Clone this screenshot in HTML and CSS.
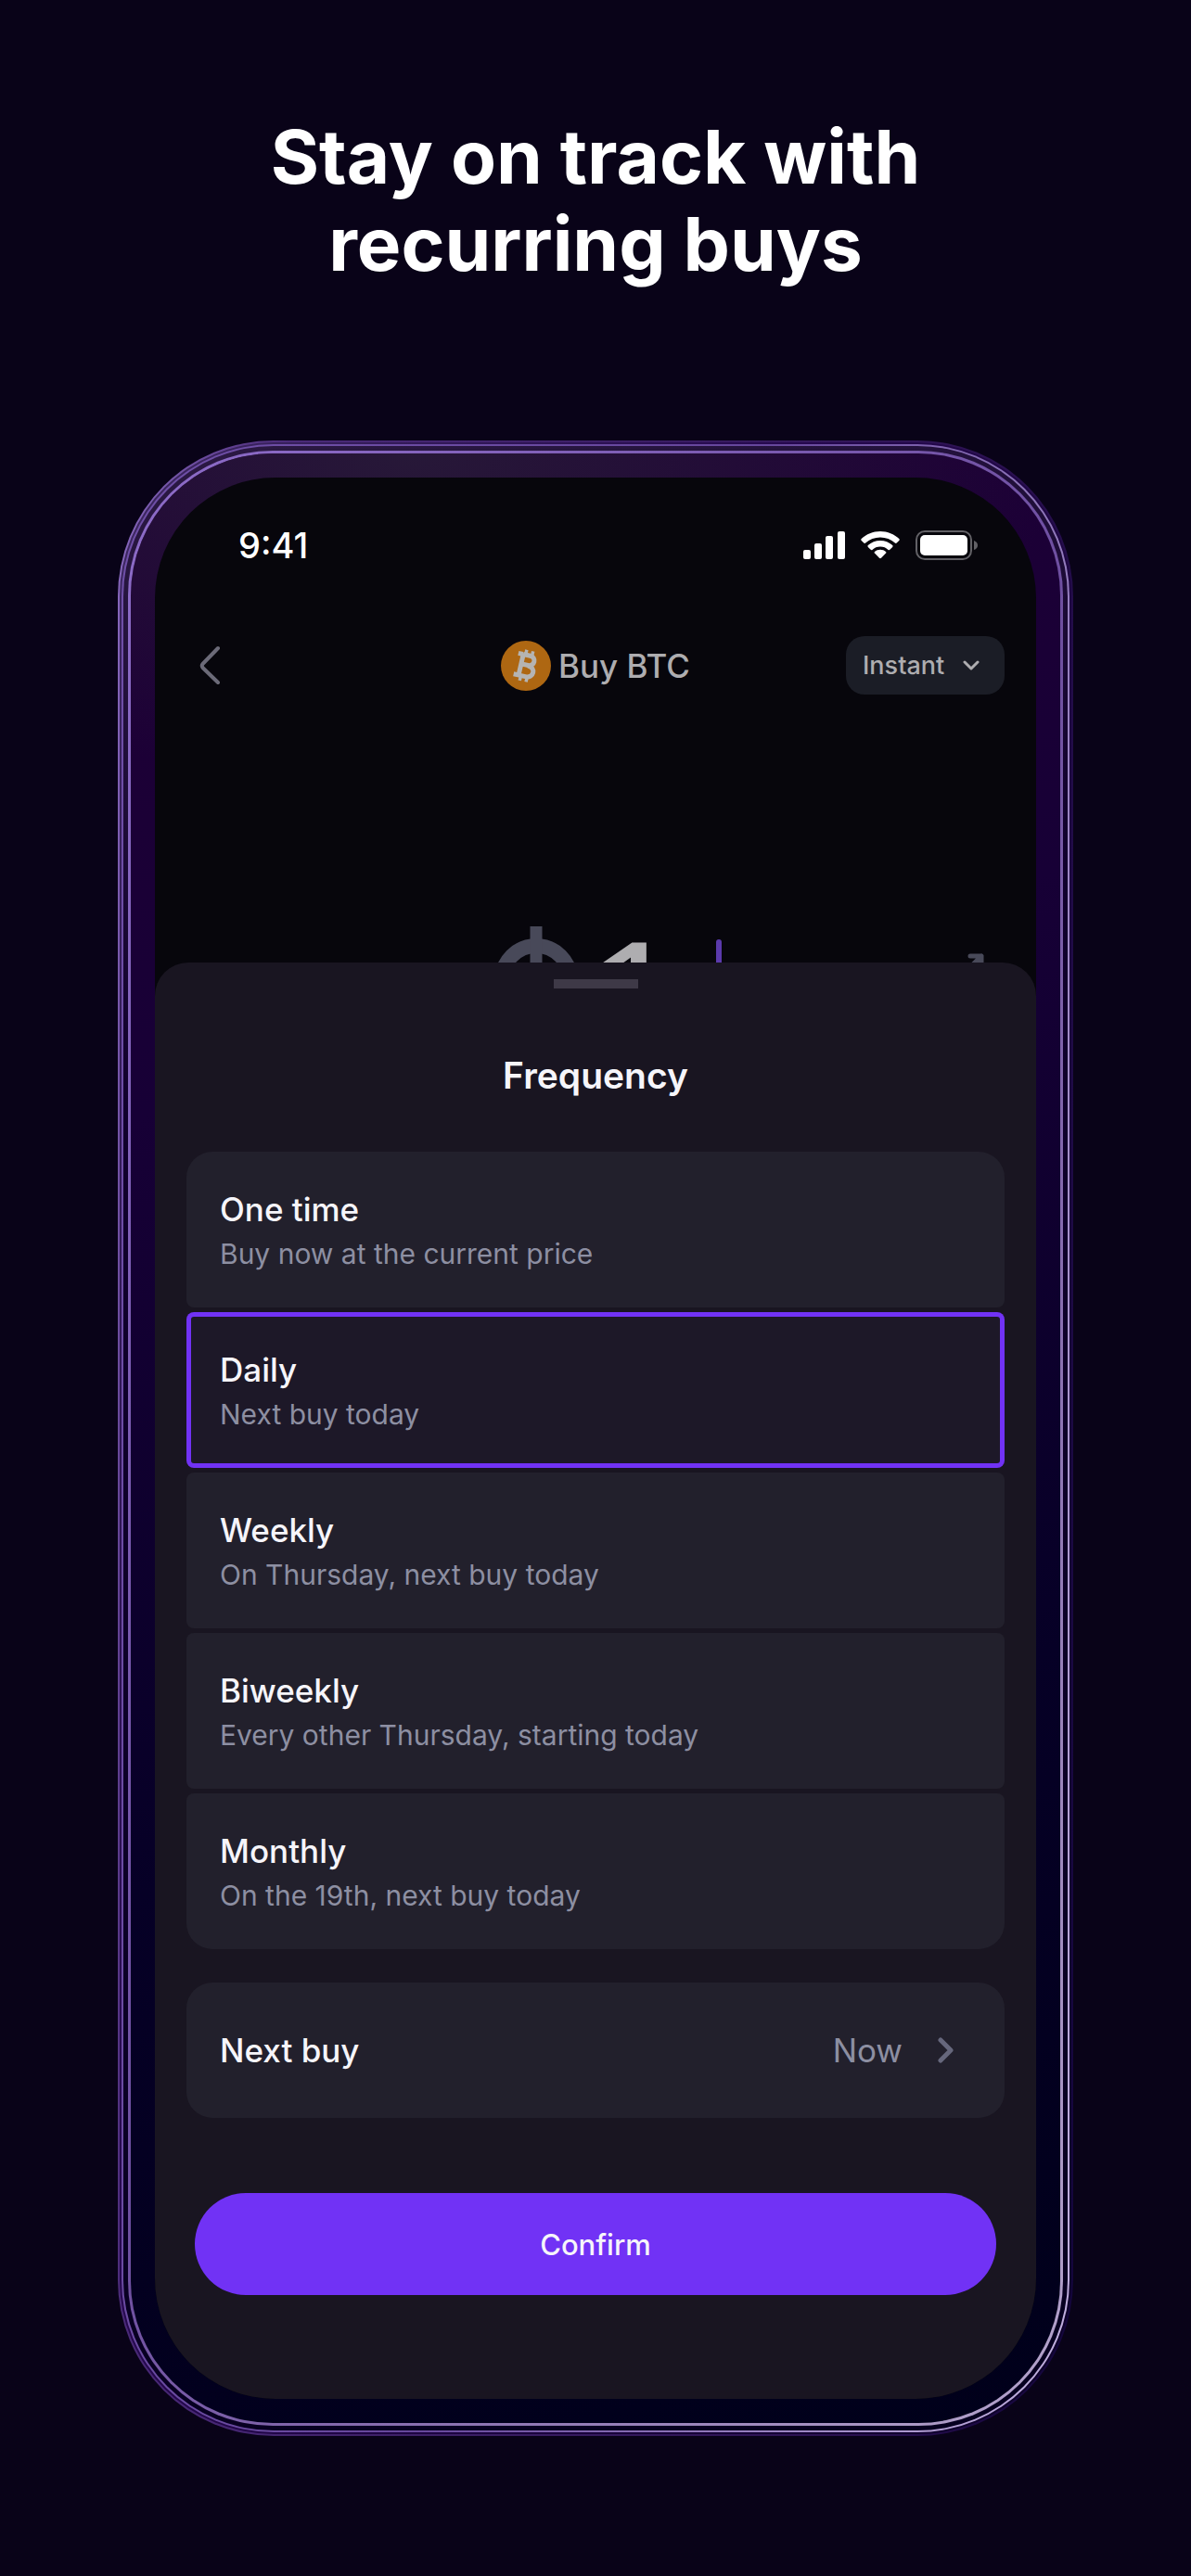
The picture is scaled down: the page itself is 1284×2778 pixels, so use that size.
FILE: index.html
```html
<!DOCTYPE html>
<html lang="en">
<head>
<meta charset="utf-8">
<meta name="viewport" content="width=device-width, initial-scale=1">
<title>Recurring buys</title>
<link rel="stylesheet" href="styles.css">
</head>
<body>
<main class="promo">
  <h1 class="headline">Stay on track with<br>recurring buys</h1>
  <div class="phone">
    <div class="phone-rim">
      <div class="phone-bezel">
        <div class="screen">
          <div class="status-bar">
            <span class="clock">9:41</span>
            <div class="status-icons">
              <svg width="45" height="30" viewBox="0 0 45 30" fill="#fff" aria-hidden="true">
                <rect x="0" y="20" width="8" height="10" rx="2"/><rect x="12" y="13" width="8" height="17" rx="2"/><rect x="24" y="5" width="8" height="25" rx="2"/><rect x="37" y="0" width="8" height="30" rx="2"/>
              </svg>
              <svg width="42" height="30" viewBox="0 0 42 30" fill="#fff" aria-hidden="true">
                <path d="M21 0C13 0 6 3 .7 8c-.6.6-.6 1.300 0 1.900l2.600 2.600c.5.5 1.200.5 1.800 0C9.400 8.600 15 6.400 21 6.400s11.600 2.200 15.900 6.100c.6.5 1.300.5 1.800 0l2.600-2.600c.6-.6.6-1.300 0-1.900C36 3 29 0 21 0z"/>
                <path d="M21 10c-5 0-9.700 1.900-13.200 5.100-.5.500-.5 1.200 0 1.800l2.900 2.900c.5.5 1.200.5 1.700.1 2.300-2.100 5.300-3.300 8.600-3.300s6.300 1.200 8.600 3.300c.5.400 1.200.4 1.700-.1l2.900-2.900c.5-.6.5-1.300 0-1.800C30.700 11.900 26 10 21 10z"/>
                <path d="M21 19.800c-2.300 0-4.400.8-6 2.100-.6.500-.6 1.200-.1 1.700l5.100 5.200c.6.600 1.400.6 2 0l5.100-5.200c.5-.5.500-1.200-.1-1.700-1.600-1.300-3.700-2.100-6-2.100z"/>
              </svg>
              <svg width="68" height="32" viewBox="0 0 68 32" aria-hidden="true">
                <rect x="1" y="1" width="59" height="30" rx="9" fill="none" stroke="#626166" stroke-width="2"/>
                <rect x="5" y="5" width="51" height="22" rx="5" fill="#fff"/>
                <path d="M63 11q4 1.500 4 5t-4 5z" fill="#626166"/>
              </svg>
            </div>
          </div>

          <header class="top-bar">
            <button class="back" type="button" aria-label="Back">
              <svg width="24" height="44" viewBox="0 0 24 44" fill="none" stroke="#6b6a78" stroke-width="4" stroke-linecap="round" stroke-linejoin="round" aria-hidden="true"><path d="M20 3 3.500 20Q2 22 3.500 24L20 40"/></svg>
            </button>
            <h2 class="asset">
              <svg width="54" height="54" viewBox="0 0 54 54" aria-hidden="true">
                <circle cx="27" cy="27" r="27" fill="#ae6712"/>
                <g transform="rotate(13 27 27)" fill="none" stroke="#b5b4b3" stroke-width="5">
                  <path d="M16 15.500h5M16 38.500h5M21.500 15.500h7.500c7.500 0 7.500 10.500 0 10.500h-7M29 26.500c9.500 0 9.500 12 0 12h-8M21.500 14v25" stroke-linejoin="round"/>
                  <path d="M24 10v6M31 10v6M24 38v6M31 38v6" stroke-width="3.500"/>
                </g>
              </svg>
              Buy BTC
            </h2>
            <label class="speed">
              <select class="speed-select" aria-label="Order speed"><option>Instant</option></select>
              <svg class="speed-arrow" width="20" height="12" viewBox="0 0 20 12" fill="none" stroke="#aeadb0" stroke-width="3" stroke-linecap="round" stroke-linejoin="round" aria-hidden="true"><path d="M3 2l7 7 7-7"/></svg>
            </label>
          </header>

          <section class="amount" aria-label="Amount">
            <div class="amount-value">
              <svg width="92" height="112" viewBox="0 0 92 112" fill="none" stroke="#484959" aria-hidden="true">
                <circle cx="46" cy="58" r="37" stroke-width="16"/><path d="M46 0v112" stroke-width="13"/>
              </svg>
              <span class="digits">1</span>
              <span class="caret"></span>
            </div>
            <svg class="swap" width="40" height="40" viewBox="0 0 40 40" fill="none" stroke="#484959" stroke-width="5" stroke-linecap="round" stroke-linejoin="round" aria-hidden="true"><path d="M25 4h12v12M37 4 4 37M4 25v12h12"/></svg>
          </section>

          <form class="sheet">
            <div class="handle"></div>
            <h3 class="sheet-title">Frequency</h3>
            <div class="options" role="radiogroup" aria-label="Frequency">
              <label class="option"><input type="radio" name="frequency"><span class="option-name">One time</span><span class="option-note">Buy now at the current price</span></label>
              <label class="option"><input type="radio" name="frequency" checked><span class="option-name">Daily</span><span class="option-note">Next buy today</span></label>
              <label class="option"><input type="radio" name="frequency"><span class="option-name">Weekly</span><span class="option-note">On Thursday, next buy today</span></label>
              <label class="option"><input type="radio" name="frequency"><span class="option-name">Biweekly</span><span class="option-note">Every other Thursday, starting today</span></label>
              <label class="option"><input type="radio" name="frequency"><span class="option-name">Monthly</span><span class="option-note">On the 19th, next buy today</span></label>
            </div>
            <button class="next-buy" type="button">
              <span class="option-name">Next buy</span>
              <span class="next-value">Now</span>
              <svg width="18" height="30" viewBox="0 0 18 30" fill="none" stroke="#66677c" stroke-width="5" stroke-linecap="round" stroke-linejoin="round" aria-hidden="true"><path d="M3 4l11 11L3 26"/></svg>
            </button>
            <button class="confirm" type="button">Confirm</button>
          </form>
        </div>
      </div>
    </div>
  </div>
</main>
</body>
</html>
```

FILE: styles.css
```css
* { box-sizing: border-box; }

body {
  margin: 0;
  min-height: 100vh;
  background: #090318;
  color: #f6f5fa;
  font-family: Inter, "Liberation Sans", sans-serif;
}

h1, h2, h3 { margin: 0; }
button, select { border: 0; font: inherit; color: inherit; }
svg { display: block; flex: none; }

.promo { padding: 122px 127px 150px; }

.headline {
  margin-bottom: 165px;
  font-size: 80px;
  line-height: 94px;
  font-weight: 700;
  text-align: center;
  color: #fff;
}

/* Device body: three thin metallic lines around a dark bezel */
.phone, .phone-rim, .phone-bezel { border-style: solid; border-color: transparent; }

.phone {
  border-width: 2px;
  border-radius: 168px;
  padding: 2px;
  background:
    linear-gradient(110deg, #3d2860, #26084f 40%, #0c0028) padding-box,
    linear-gradient(95deg, #8a6bc0, #4a2a78 15%, #2a1050 80%, #12053a) border-box;
}

.phone-rim {
  border-width: 2px;
  border-radius: 164px;
  padding: 5px;
  background:
    linear-gradient(165deg, #2c1a44, #10002c 30%, #060020) padding-box,
    linear-gradient(100deg, #6f4fa8, #66479c 50%, #c3b3e0) border-box;
}

.phone-bezel {
  border-width: 3px;
  border-radius: 156px;
  padding: 26px;
  background:
    radial-gradient(700px 360px at 30% 0, #271838, transparent) padding-box,
    linear-gradient(165deg, #200036, #170036 30%, #060026 65%, #00001a) padding-box,
    linear-gradient(120deg, #8d6cc8, #6e4fa0 50%, #b5a5cc) border-box;
}

.screen {
  overflow: hidden;
  border-radius: 130px;
  background: #07060c;
}

.status-bar {
  display: flex;
  align-items: center;
  justify-content: space-between;
  padding: 50px 62px 0 90px;
}

.clock { font-size: 38px; line-height: 46px; font-weight: 500; color: #fff; }
.status-icons { display: flex; align-items: center; gap: 17px; }

.top-bar {
  display: grid;
  grid-template-columns: 1fr auto 1fr;
  align-items: center;
  margin-top: 75px;
  padding: 0 34px;
}

.back { justify-self: start; padding: 0 14px; background: none; }

.asset {
  display: flex;
  align-items: center;
  gap: 8px;
  font-size: 35px;
  line-height: 44px;
  font-weight: 500;
  color: #aeadb0;
}

.speed { display: grid; justify-self: end; align-items: center; }

.speed-select, .speed-arrow { grid-area: 1 / 1; }

.speed-select {
  appearance: none;
  height: 63px;
  padding: 0 64px 0 18px;
  border-radius: 20px;
  background: #1b1d26;
  font-size: 27px;
  font-weight: 500;
  color: #aeadb0;
}

.speed-arrow { justify-self: end; margin-right: 26px; pointer-events: none; }

/* Only the top of the amount shows above the sheet */
.amount {
  display: grid;
  grid-template-columns: 1fr auto 1fr;
  overflow: hidden;
  height: 39px;
  margin-top: 250px;
  padding: 0 34px;
}

.amount-value {
  grid-column: 2;
  display: flex;
  align-items: flex-start;
  padding-left: 26px;
}

.digits {
  margin: 0 34px 0 8px;
  font-family: "Liberation Sans", sans-serif;
  font-size: 190px;
  line-height: 164px;
  color: #aeadb0;
}

.caret { width: 6px; height: 100px; margin-top: 14px; border-radius: 3px; background: #5b3aac; }
.swap { justify-self: end; margin: 28px 22px 0 0; }

.sheet {
  display: flex;
  flex-direction: column;
  padding: 18px 34px 112px;
  border-radius: 36px 36px 0 0;
  background: #191521;
}

.handle { align-self: center; width: 91px; height: 10px; background: #3e3947; }

.sheet-title {
  margin: 68px 0 56px;
  font-size: 39px;
  line-height: 52px;
  font-weight: 600;
  text-align: center;
}

.options { display: flex; flex-direction: column; gap: 5px; }

.option {
  position: relative;
  display: flex;
  flex-direction: column;
  gap: 4px;
  padding: 40px 36px 36px;
  border-radius: 8px;
  background: #22202c;
}

.option:first-child { border-top-left-radius: 28px; border-top-right-radius: 28px; }
.option:last-child { border-bottom-left-radius: 28px; border-bottom-right-radius: 28px; }
.option:has(:checked) { background: #1d1828; box-shadow: inset 0 0 0 5px #7132f5; }
.option input { position: absolute; inset: 0; margin: 0; opacity: 0; }

.option-name { font-size: 35px; line-height: 44px; font-weight: 500; }
.option-note { font-size: 30px; line-height: 44px; color: #8d8fa2; }

.next-buy {
  display: flex;
  align-items: center;
  margin-top: 36px;
  padding: 51px 54px 51px 36px;
  border-radius: 28px;
  background: #22202c;
  text-align: left;
}

.next-value { margin: 0 38px 0 auto; font-size: 35px; line-height: 44px; color: #8d8fa2; }

.confirm {
  height: 110px;
  margin: 81px 9px 0;
  border-radius: 55px;
  background: #7132f5;
  font-size: 31px;
  font-weight: 500;
}
```
